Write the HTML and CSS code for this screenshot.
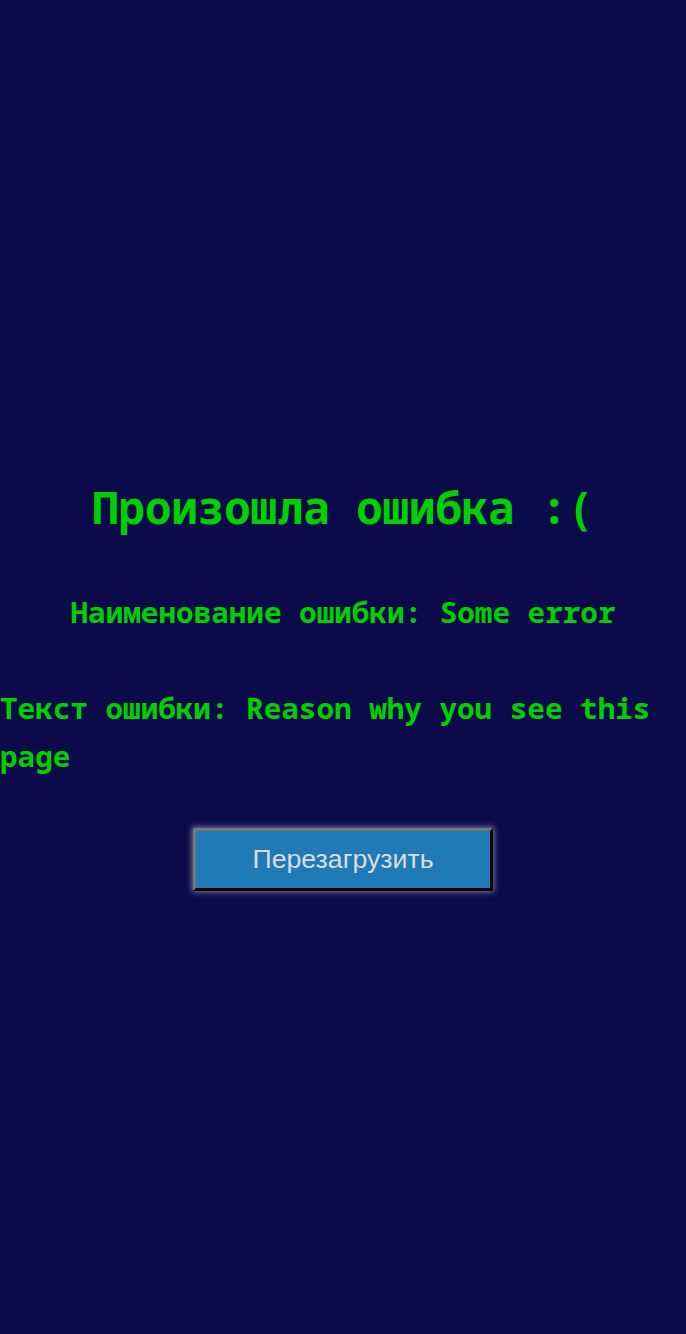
FILE: index.html
```html
<!DOCTYPE html>
<html lang="ru">
<head>
<meta charset="utf-8">
<link rel="stylesheet" href="styles.css">
</head>
<body>
<main class="page">
  <h1 class="title">Произошла ошибка :(</h1>
  <p class="name">Наименование ошибки: Some error</p>
  <p class="text">Текст ошибки: Reason why you see this page</p>
  <div class="actions"><button class="reload">Перезагрузить</button></div>
</main>
</body>
</html>
```
FILE: styles.css
```css
html, body {
  margin: 0;
  padding: 0;
  background: #0b0a4a;
  height: 100%;
}
.page {
  box-sizing: border-box;
  min-height: 100%;
  padding-top: 33px;
  display: flex;
  flex-direction: column;
  justify-content: center;
  color: #00d000;
  font-family: "Noto Sans Mono", "DejaVu Sans Mono", monospace;
  font-weight: bold;
}
.title {
  margin: 0 0 51px;
  text-align: center;
  font-size: 44px;
  line-height: 60px;
}
.name {
  margin: 0 0 48px;
  text-align: center;
  font-size: 29.3px;
  line-height: 48px;
}
.text {
  margin: 0 0 48px;
  font-size: 29.3px;
  line-height: 48px;
}
.actions {
  display: flex;
  justify-content: center;
}
.reload {
  width: 300px;
  height: 63px;
  background: #1f7bb6;
  color: #dcdcdc;
  font-family: "Liberation Sans", Arial, sans-serif;
  font-size: 26.7px;
  font-weight: normal;
  border: 3px outset #777;
  border-right-color: #222;
  border-bottom-color: #222;
  box-shadow: 0 0 6px 1px rgba(200,200,220,0.6);
}
```
